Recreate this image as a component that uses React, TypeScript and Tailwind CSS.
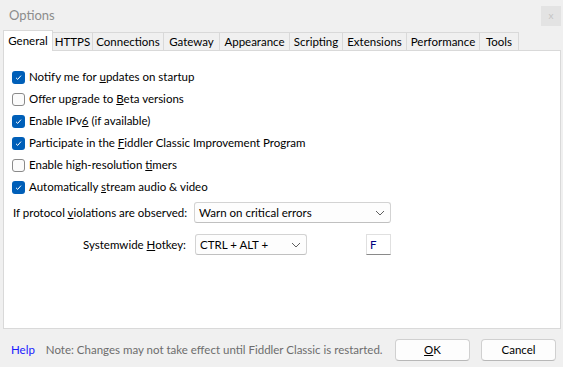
import { ReactNode } from "react";

// tab widths measured from the dialog
const tabs: { label: string; w: string }[] = [
  { label: "General", w: "w-[50px]" },
  { label: "HTTPS", w: "w-[40px]" },
  { label: "Connections", w: "w-[71px]" },
  { label: "Gateway", w: "w-[56px]" },
  { label: "Appearance", w: "w-[70px]" },
  { label: "Scripting", w: "w-[53px]" },
  { label: "Extensions", w: "w-[64px]" },
  { label: "Performance", w: "w-[73px]" },
  { label: "Tools", w: "w-[39px]" },
];

const options: { label: ReactNode; checked: boolean }[] = [
  { label: <>Notify me for <u>u</u>pdates on startup</>, checked: true },
  { label: <>Offer upgrade to <u>B</u>eta versions</>, checked: false },
  { label: <>Enable IPv<u>6</u> (if available)</>, checked: true },
  { label: <>Participate in the <u>F</u>iddler Classic Improvement Program</>, checked: true },
  { label: <>Enable high-resolution <u>t</u>imers</>, checked: false },
  { label: <>Automatically <u>s</u>tream audio &amp; video</>, checked: true },
];

function CheckBox({ checked }: { checked: boolean }) {
  if (!checked) {
    return <div className="w-[13px] h-[13px] shrink-0 rounded-[3px] border border-[#8a8a8a] bg-[#fbfbfb]" />;
  }
  return (
    <div className="w-[13px] h-[13px] shrink-0 rounded-[3px] bg-[#005fb8] flex items-center justify-center">
      <svg width="9" height="9" viewBox="0 0 9 9" fill="none">
        <path d="M2 4.8 L3.7 6.4 L7 2.6" stroke="white" strokeWidth="1" />
      </svg>
    </div>
  );
}

function Chevron() {
  return (
    <svg width="10" height="6" viewBox="0 0 10 6" fill="none">
      <path d="M1 1 L5 5 L9 1" stroke="#606060" strokeWidth="1" />
    </svg>
  );
}

function Select({ value, className }: { value: string; className: string }) {
  return (
    <div
      className={`flex items-center justify-between pl-[4px] pr-[5px] bg-[#fdfdfd] border border-[#d3d3d3] border-b-[#c0c0c0] rounded-[3px] ${className}`}
    >
      <span className="whitespace-nowrap">{value}</span>
      <Chevron />
    </div>
  );
}

export default function App() {
  return (
    <div
      className="w-[563px] h-[367px] bg-[#f0f0f0] flex flex-col text-[11.5px] text-black overflow-hidden whitespace-nowrap"
      style={{ fontFamily: 'Lato, "Noto Sans", sans-serif' }}
    >
      {/* Title bar */}
      <div className="h-[31px] flex items-center justify-between pl-[9px] pr-[2px]">
        <span className="text-[13px] text-[#8c8c8c]">Options</span>
        <div className="w-[20px] h-[20px] bg-[#e3e3e3] flex items-center justify-center text-[10px] text-[#c4c4c4]">
          x
        </div>
      </div>

      {/* Tab strip */}
      <div className="flex items-end pl-[3px] h-[19px] relative z-10">
        {tabs.map((t, i) =>
          i === 0 ? (
            <div
              key={t.label}
              className={`${t.w} h-[21px] bg-white border border-b-0 border-[#d9d9d9] flex items-center justify-center -mb-px`}
            >
              {t.label}
            </div>
          ) : (
            <div
              key={t.label}
              className={`${t.w} h-[18px] border-t border-r border-[#d9d9d9] flex items-center justify-center`}
            >
              {t.label}
            </div>
          )
        )}
      </div>

      {/* Panel */}
      <div className="ml-[3px] mr-[2px] h-[279px] bg-white border border-[#d9d9d9] pt-[15px] pl-[8px]">
        <div className="flex flex-col">
          {options.map((o, i) => (
            <div key={i} className="h-[22px] flex items-center gap-[4px]">
              <CheckBox checked={o.checked} />
              <span>{o.label}</span>
            </div>
          ))}
        </div>

        <div className="flex items-center mt-[4px] h-[21px]">
          <span className="ml-[1px] w-[181px]">
            If protocol <u>v</u>iolations are observed:
          </span>
          <Select value="Warn on critical errors" className="w-[197px] h-[21px]" />
        </div>

        <div className="flex items-center mt-[11px] h-[21px]">
          <span className="w-[183px] text-right pr-[9px]">
            Systemwide <u>H</u>otkey:
          </span>
          <Select value="CTRL + ALT +" className="w-[112px] h-[21px]" />
          <div className="ml-[59px] w-[25px] h-[21px] bg-white border border-[#e0e0e0] border-b-[#8a8a8a] pl-[3px] flex items-center text-[#000080]">
            F
          </div>
        </div>
      </div>

      {/* Footer */}
      <div className="flex-1 flex items-center pt-[4px] pl-[11px] pr-[7px]">
        <span className="text-[#1a1aff]">Help</span>
        <span className="ml-[11px] text-[#6d6d6d]">
          Note: Changes may not take effect until Fiddler Classic is restarted.
        </span>
        <div className="ml-auto flex gap-[11px]">
          <button className="w-[75px] h-[22px] bg-[#fdfdfd] border border-[#d0d0d0] border-b-[#b8b8b8] rounded-[4px]">
            <u>O</u>K
          </button>
          <button className="w-[75px] h-[22px] bg-[#fdfdfd] border border-[#d0d0d0] border-b-[#b8b8b8] rounded-[4px]">
            Cancel
          </button>
        </div>
      </div>
    </div>
  );
}
